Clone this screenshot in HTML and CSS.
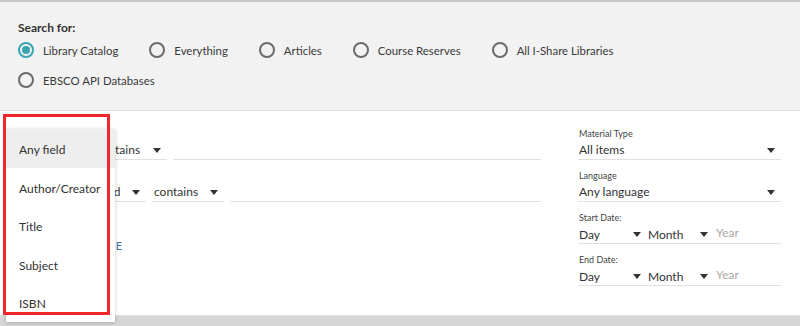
FILE: index.html
```html
<!DOCTYPE html>
<html>
<head>
<meta charset="utf-8">
<link rel="stylesheet" href="styles.css">
</head>
<body>
<div class="page">
  <section class="search-for">
    <div class="sf-title">Search for:</div>
    <div class="radios">
      <label class="radio checked"><span class="circle"></span><span class="rlabel">Library Catalog</span></label>
      <label class="radio"><span class="circle"></span><span class="rlabel">Everything</span></label>
      <label class="radio"><span class="circle"></span><span class="rlabel">Articles</span></label>
      <label class="radio"><span class="circle"></span><span class="rlabel">Course Reserves</span></label>
      <label class="radio"><span class="circle"></span><span class="rlabel">All I-Share Libraries</span></label>
      <label class="radio"><span class="circle"></span><span class="rlabel">EBSCO API Databases</span></label>
    </div>
  </section>

  <section class="adv">
    <div class="rows">
      <div class="row">
        <div class="select w-field1"><span>Any field</span><i class="caret"></i></div>
        <div class="select w-op1"><span>contains</span><i class="caret"></i></div>
        <div class="input"></div>
      </div>
      <div class="row">
        <div class="select w-bool"><span>AND</span><i class="caret"></i></div>
        <div class="select w-field2"><span>Any field</span><i class="caret"></i></div>
        <div class="select w-op2"><span>contains</span><i class="caret"></i></div>
        <div class="input"></div>
      </div>
      <a class="add-line">+ ADD A NEW LINE</a>
    </div>

    <div class="side">
      <div class="group">
        <div class="lbl">Material Type</div>
        <div class="select"><span>All items</span><i class="caret"></i></div>
      </div>
      <div class="group">
        <div class="lbl">Language</div>
        <div class="select"><span>Any language</span><i class="caret"></i></div>
      </div>
      <div class="group">
        <div class="lbl">Start Date:</div>
        <div class="date-row">
          <div class="dsel d-day"><span>Day</span><i class="caret"></i></div>
          <div class="dsel d-month"><span>Month</span><i class="caret"></i></div>
          <div class="year">Year</div>
        </div>
      </div>
      <div class="group">
        <div class="lbl">End Date:</div>
        <div class="date-row">
          <div class="dsel d-day"><span>Day</span><i class="caret"></i></div>
          <div class="dsel d-month"><span>Month</span><i class="caret"></i></div>
          <div class="year">Year</div>
        </div>
      </div>
    </div>
  </section>

  <div class="footer-bar"></div>

  <ul class="menu">
    <li class="active">Any field</li>
    <li>Author/Creator</li>
    <li>Title</li>
    <li>Subject</li>
    <li>ISBN</li>
  </ul>
  <div class="highlight-box"></div>
</div>
</body>
</html>
```

FILE: styles.css
```css
* { box-sizing: border-box; }
html, body { margin: 0; padding: 0; }
body {
  background: #fff;
  font-family: Lato, "Open Sans", sans-serif;
  color: #333;
  font-size: 12px;
  overflow: hidden;
}
.page { position: relative; width: 800px; height: 326px; overflow: hidden; }

.search-for {
  background: #f2f2f2;
  border-top: 2px solid #c9c9c9;
  border-bottom: 1px solid #e1e1e1;
  height: 111px;
  padding: 17px 18px 0 18px;
}
.sf-title { font-weight: 700; font-size: 12px; line-height: 16px; padding-top: 1px; height: 16px; color: #333; }
.radios {
  display: flex;
  flex-wrap: wrap;
  column-gap: 31px;
  width: 640px;
}
.radio { display: flex; align-items: center; height: 30px; cursor: pointer; }
.circle {
  width: 16px; height: 16px;
  border: 2px solid #6b6b6b;
  border-radius: 50%;
  margin-right: 9px;
  display: flex; align-items: center; justify-content: center;
}
.radio.checked .circle { border-color: #3aa5b1; }
.radio.checked .circle::after {
  content: ""; width: 8px; height: 8px; border-radius: 50%; background: #3aa5b1;
}
.rlabel { font-size: 11.4px; color: #3a3a3a; padding-top: 1px; }

.adv {
  height: 204px;
  display: grid;
  grid-template-columns: 1fr 203px;
  column-gap: 37px;
  padding: 0 19px 0 18px;
  align-items: start;
}
.rows { padding-top: 28px; display: flex; flex-direction: column; }
.row { display: flex; gap: 6px; margin-bottom: 21px; }
.select {
  height: 21px;
  line-height: 18px;
  padding: 2px 6px 0 2px;
  border-bottom: 1px solid #e0e0e0;
  display: flex; align-items: center; justify-content: space-between;
  color: #333;
  font-size: 12px;
}
.caret {
  width: 0; height: 0;
  border-left: 4px solid transparent;
  border-right: 4px solid transparent;
  border-top: 5px solid #333;
}
.w-field1 { width: 70px; }
.w-op1 { width: 73px; }
.w-bool { width: 48px; }
.w-field2 { width: 74px; }
.w-op2 { width: 72px; }
.input { flex: 1; height: 21px; border-bottom: 1px solid #e0e0e0; }
.add-line {
  margin-top: 15px;
  line-height: 16px;
  font-size: 11px;
  color: #3f72a8;
  letter-spacing: 0.3px;
  padding-left: 2px;
}

.side { padding-top: 16px; display: flex; flex-direction: column; gap: 9px; }
.lbl { font-size: 9px; line-height: 12px; color: #444; padding-left: 1px; padding-top: 1px; height: 12px; }
.side .select { padding-left: 1px; }
.date-row {
  display: flex;
  height: 21px;
  padding-top: 2px;
  border-bottom: 1px solid #e0e0e0;
  align-items: center;
}
.dsel { display: flex; align-items: center; justify-content: space-between; padding-left: 1px; }
.d-day { width: 63px; margin-right: 6px; }
.d-month { width: 61px; margin-right: 8px; }
.year { color: #a8a8a8; margin-top: -3px; }

.footer-bar {
  height: 11px;
  background: #d6d6d6;
  border-top: 1px solid #e3e3e3;
}

.menu {
  position: absolute;
  left: 6px; top: 129px;
  width: 109px;
  margin: 0; padding: 0;
  list-style: none;
  background: #fff;
  box-shadow: 0 1px 4px rgba(0,0,0,0.22);
}
.menu li {
  height: 38.5px;
  line-height: 34.5px;
  padding-top: 4px;
  padding-left: 13px;
  font-size: 12px;
  color: #333;
}
.menu li.active { background: #eeeeee; }

.highlight-box {
  position: absolute;
  left: 3px; top: 114px;
  width: 107px; height: 201px;
  border: 3px solid #f3262b;
}
```
